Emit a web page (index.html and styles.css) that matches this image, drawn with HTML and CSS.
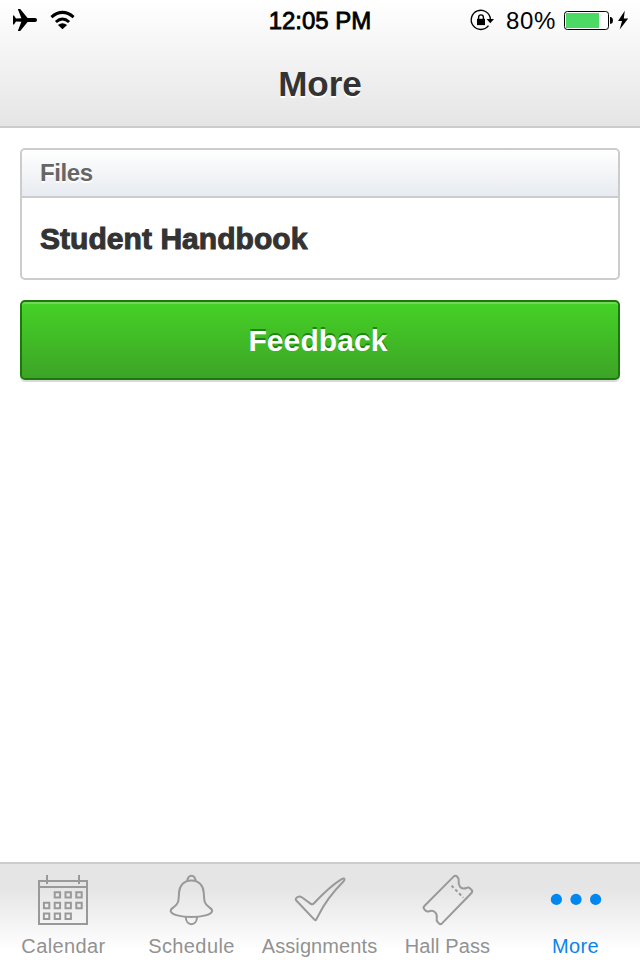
FILE: index.html
```html
<!DOCTYPE html>
<html lang="en">
<head>
    <meta charset="UTF-8">
    <meta name="viewport" content="width=device-width, initial-scale=1.0">
    <title>More</title>
    <link rel="stylesheet" href="styles.css">
</head>
<body>
    <div id="app">
        <header class="header">
            <div class="status">
                <svg class="status-left" width="80" height="40" viewBox="0 0 80 40">
                    <path d="M37 20c0 1.2-.8 2-2 2h-7.4L20.2 31H17.8l3.6-9.2L16 21.4L14 24.6H13V15.4h1l2 3.2l5.4-.4L17.8 9H20.2l7.4 9h7.4c1.2 0 2 .8 2 2z"/>
                    <path class="wifi" d="M51.4 17.1Q62.5 7.7 73.6 17.1M55.9 22Q62.5 16 69.1 22"/>
                    <path d="M57.9 25Q62.5 21.5 67.1 25L62.5 29.2z"/>
                </svg>
                <span class="time">12:05 PM</span>
                <div class="status-right">
                    <svg width="28" height="40" viewBox="468 0 28 40">
                        <path class="lock-ring" d="M490.4 19A9.6 9.6 0 1 0 488.5 25.7"/>
                        <path d="M486.6 19h7.4l-3.7 4.2z"/>
                        <path d="M477 18.8h8v6.3h-8z"/>
                        <path class="lock-ring" d="M478.6 19v-1.7a2.4 2.4 0 0 1 4.8 0V19"/>
                    </svg>
                    <span class="percent">80%</span>
                    <svg width="76" height="40" viewBox="564 0 76 40">
                        <rect class="battery" x="564.5" y="11.5" width="44" height="18" rx="2.8"/>
                        <rect class="charge" x="566" y="13" width="33" height="15"/>
                        <path d="M610 17h1q2 .8 2 3.4t-2 3.4h-1z"/>
                        <path d="M624.8 10.8L618 21h4L619.7 29.5L628.2 18.5h-4.4z"/>
                    </svg>
                </div>
            </div>
            <h1>More</h1>
        </header>

        <main class="content">
            <section class="panel">
                <h2>Files</h2>
                <a class="file">Student Handbook</a>
            </section>
            <button class="feedback" type="button">Feedback</button>
        </main>

        <nav class="tabs">
            <a class="tab">
                <svg width="128" height="64" viewBox="0 0 128 64">
                    <path d="M39 17h48v43H39zM39 23h48M47 11v9M79 11v9"/>
                    <path d="M54.7 28.2h5.4v5.4h-5.4zM65.5 28.2h5.4v5.4h-5.4zM76.3 28.2h5.4v5.4h-5.4z"/>
                    <path d="M43.9 38.8h5.4v5.4h-5.4zM54.7 38.8h5.4v5.4h-5.4zM65.5 38.8h5.4v5.4h-5.4zM76.3 38.8h5.4v5.4h-5.4z"/>
                    <path d="M43.9 49.5h5.4v5.4h-5.4zM54.7 49.5h5.4v5.4h-5.4zM65.5 49.5h5.4v5.4h-5.4z"/>
                </svg>
                <span>Calendar</span>
            </a>
            <a class="tab">
                <svg width="128" height="64" viewBox="0 0 128 64">
                    <path d="M59.5 17C59 10 67.9 10 67.4 17"/>
                    <path d="M63.4 16.4C55.5 16.4 51.3 22 51 29C50.7 37 50.5 40.2 45.5 43.3C42.8 45 42.2 46.2 42.8 47.6C44 50.4 52 53 63.4 53S82.8 50.4 84 47.6C84.6 46.2 84 45 81.3 43.3C76.3 40.2 76.1 37 75.8 29C75.5 22 71.3 16.4 63.4 16.4z"/>
                    <path d="M57.8 53C57.8 62.5 69 62.5 69 53"/>
                </svg>
                <span>Schedule</span>
            </a>
            <a class="tab tight">
                <svg width="128" height="64" viewBox="0 0 128 64">
                    <path d="M40.3 36.5Q39 35 40.6 33.8Q43.2 31.4 45.8 33.3L54.5 39.6Q56.4 41 58 39.3C67 29.5 76 21 86 14.8Q88.3 13.8 88.5 15.4Q88.6 16.2 87.4 17.5C76 29 69 38 62.5 51.2L60.2 55.4Q59.4 56.8 58.4 55.7z"/>
                </svg>
                <span>Assignments</span>
            </a>
            <a class="tab tight">
                <svg width="128" height="64" viewBox="0 0 128 64">
                    <path d="M69.8 12.4Q71.6 11 73.1 12.6Q75.2 14.5 74.7 17Q74.2 20.5 76 22.7Q78.8 25.6 82.4 24Q84.4 22.7 86.3 24.6L87.6 26Q88.9 27.5 87.5 29L58 59.4Q56.5 60.8 55 59.4L53.6 58Q52.2 56.6 52.7 54.4Q53.3 50.4 51.2 48.4Q48.5 45.7 45 47.3Q43 48 41.2 46.2L40.3 45.2Q38.8 43.5 40.4 42z"/>
                    <path class="perforation" d="M67.5 21.6L79.3 33.6"/>
                </svg>
                <span>Hall Pass</span>
            </a>
            <a class="tab active">
                <svg width="128" height="64" viewBox="0 0 128 64">
                    <circle cx="44.4" cy="35.4" r="5.6"/>
                    <circle cx="64" cy="35.4" r="5.6"/>
                    <circle cx="83.6" cy="35.4" r="5.6"/>
                </svg>
                <span>More</span>
            </a>
        </nav>
    </div>
</body>
</html>
```

FILE: styles.css
```css
body {
    font-family: "Liberation Sans", Arial, sans-serif;
    margin: 0;
    background-color: #fff;
}

#app {
    display: flex;
    flex-direction: column;
    height: 960px;
}

svg {
    display: block;
}

.header {
    box-sizing: border-box;
    height: 128px;
    border-bottom: 2px solid #ccc;
    background: linear-gradient(#fff, #e5e5e5);
}

.status {
    display: grid;
    grid-template-columns: 1fr auto 1fr;
    height: 40px;
    line-height: 42px;
    font-size: 24px;
    color: #000;
}

.time {
    -webkit-text-stroke: 0.8px #000;
}

.status-right {
    display: flex;
    justify-content: flex-end;
}

.percent {
    width: 68px;
    padding-left: 10px;
    letter-spacing: 0.7px;
    box-sizing: border-box;
}

.status-right svg {
    flex-shrink: 0;
}

.wifi {
    fill: none;
    stroke: #000;
    stroke-width: 3;
}

.lock-ring {
    fill: none;
    stroke: #000;
    stroke-width: 1.4;
}

.battery {
    fill: #fff;
    stroke: #000;
    stroke-width: 1;
}

.charge {
    fill: #4cd964;
}

h1 {
    margin: 0;
    font-size: 35px;
    line-height: 88px;
    text-align: center;
    color: #333;
    text-shadow: 0 2px 0 #fff;
}

.content {
    flex: 1;
    padding: 20px;
}

.panel {
    border: 2px solid #ccc;
    border-radius: 5px;
    overflow: hidden;
}

.panel h2 {
    margin: 0;
    padding-left: 18px;
    height: 46px;
    line-height: 46px;
    font-size: 24px;
    letter-spacing: -0.4px;
    color: #666;
    text-shadow: 0 2px 0 #fff;
    border-bottom: 2px solid #ccc;
    background: linear-gradient(#fff, #e7ebf0);
}

.file {
    display: block;
    padding-left: 18px;
    height: 80px;
    line-height: 82px;
    font-size: 30px;
    font-weight: bold;
    letter-spacing: 0.05px;
    color: #333;
    -webkit-text-stroke: 1px #333;
}

.feedback {
    display: block;
    width: 100%;
    height: 80px;
    margin-top: 20px;
    padding: 2px 4px 0 0;
    border: 2px solid #1c780b;
    border-radius: 5px;
    background: linear-gradient(#45d227, #3da426);
    box-shadow: inset 0 2px 0 #74d65d, 0 2px 0 #dadada;
    font-family: inherit;
    font-size: 30px;
    font-weight: bold;
    letter-spacing: 0.1px;
    color: #fff;
    text-shadow: 0 -2px 0 #1c8410;
}

.tabs {
    display: grid;
    grid-template-columns: repeat(5, 128px);
    box-sizing: border-box;
    height: 98px;
    border-top: 2px solid #ccc;
    background: linear-gradient(#e5e5e5 25%, #fff 90%);
}

.tab {
    text-align: center;
    font-size: 20px;
    line-height: 36px;
    letter-spacing: 0.4px;
    color: #929292;
}

.tab span {
    display: block;
    margin-right: 1px;
}

.tight {
    letter-spacing: 0.1px;
}

.tab svg {
    fill: none;
    stroke: #999;
    stroke-width: 2;
}

.perforation {
    stroke-dasharray: 3 2.4;
}

.active {
    color: #0a84ea;
}

.active svg {
    fill: #0088f0;
    stroke: none;
}
```
